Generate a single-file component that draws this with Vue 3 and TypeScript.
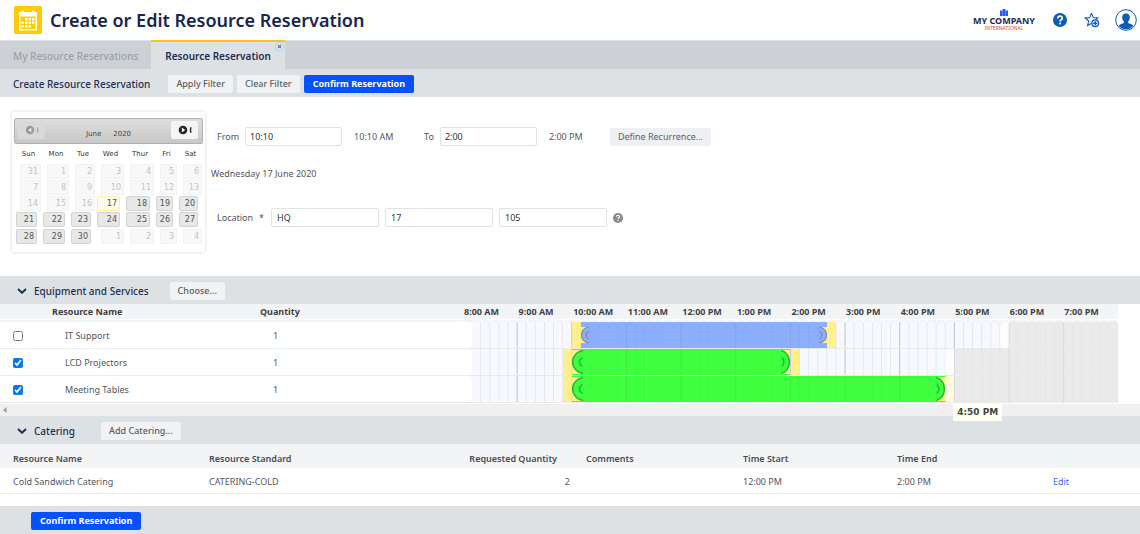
<script setup lang="ts">
import { ref } from 'vue'

interface Day { n: number; state: 'off' | 'on' | 'today' }
interface Band { kind: string; from: number; to: number }
interface Resource {
  name: string
  quantity: number
  checked: boolean
  color: string
  from: number
  to: number
  bands: Band[]
  tip?: string
}

const dayNames = ['Sun', 'Mon', 'Tue', 'Wed', 'Thur', 'Fri', 'Sat']
const numbers = [31, ...Array.from({ length: 30 }, (_, i) => i + 1), 1, 2, 3, 4]
const weeks: Day[][] = Array.from({ length: 5 }, (_, w) =>
  numbers.slice(w * 7, w * 7 + 7).map((n, d) => {
    const i = w * 7 + d
    return { n, state: i === 17 ? 'today' : i > 17 && i < 31 ? 'on' : 'off' }
  })
)

const hours = ['8:00 AM', '9:00 AM', '10:00 AM', '11:00 AM', '12:00 PM', '1:00 PM', '2:00 PM', '3:00 PM', '4:00 PM', '5:00 PM', '6:00 PM', '7:00 PM']

// Times are minutes after 8:00 AM; the scale covers twelve hours.
const resources = ref<Resource[]>([
  {
    name: 'IT Support', quantity: 1, checked: false, color: 'blue', from: 130, to: 400,
    bands: [
      { kind: 'buffer', from: 120, to: 130 },
      { kind: 'buffer', from: 400, to: 410 },
      { kind: 'after', from: 590, to: 600 },
      { kind: 'closed', from: 600, to: 720 }
    ]
  },
  {
    name: 'LCD Projectors', quantity: 1, checked: true, color: 'green', from: 120, to: 360,
    bands: [
      { kind: 'buffer', from: 110, to: 120 },
      { kind: 'buffer', from: 360, to: 370 },
      { kind: 'after', from: 530, to: 540 },
      { kind: 'closed', from: 540, to: 720 }
    ]
  },
  {
    name: 'Meeting Tables', quantity: 1, checked: true, color: 'green', from: 120, to: 530,
    bands: [
      { kind: 'buffer', from: 110, to: 120 },
      { kind: 'buffer', from: 530, to: 540 },
      { kind: 'after', from: 530, to: 540 },
      { kind: 'closed', from: 540, to: 720 }
    ],
    tip: '4:50 PM'
  }
])

const span = (from: number, to: number) => ({ left: `${from / 7.2}%`, width: `${(to - from) / 7.2}%` })

const start = ref('10:10')
const end = ref('2:00')
const building = ref('HQ')
const floor = ref('17')
const room = ref('105')
</script>

<template>
  <div class="page">
    <header class="top">
      <svg class="app-icon" viewBox="0 0 28 28" aria-hidden="true">
        <rect width="28" height="28" rx="2" fill="#fc0" />
        <path fill="#fff" d="M5 6h2.500V4.500h2.500V6h8V4.500h2.500V6H23v18.500H5z" />
        <path fill="#fc0" d="M6.500 10.500h15V23h-15z" />
        <path fill="#fff" d="M11 12h2.400v2.400H11zM14.500 12h2.400v2.400h-2.400zM18 12h2.400v2.400H18zM7.500 15.500h2.400v2.400H7.500zM11 15.500h2.400v2.400H11zM14.500 15.500h2.400v2.400h-2.400zM18 15.500h2.400v2.400H18zM7.500 19h2.400v2.400H7.500zM11 19h2.400v2.400H11zM14.500 19h2.400v2.400h-2.400z" />
      </svg>
      <h1>Create or Edit Resource Reservation</h1>
      <div class="brand">
        <svg viewBox="0 0 8 7" aria-hidden="true"><path fill="#1f5fff" d="M0 1.500h2.200V7H0zM2.500 0h3v7h-3zM5.800 1.500H8V7H5.800z" /></svg>
        <strong>MY COMPANY</strong>
        <span>INTERNATIONAL</span>
      </div>
      <button class="icon" aria-label="Help">
        <svg width="14" height="14" viewBox="0 0 14 14"><circle cx="7" cy="7" r="7" fill="#0a5cb8" /><path d="M4.800 5.400c0-3 4.600-2.900 4.500-.2 0 1.600-2.200 1.500-2.200 3.200" fill="none" stroke="#fff" stroke-width="1.600" /><circle cx="7.100" cy="10.500" r="1" fill="#fff" /></svg>
      </button>
      <button class="icon" aria-label="Add favourite">
        <svg width="16" height="16" viewBox="0 0 16 16"><path d="M7.500 1.300 9.300 5.600l4.500.4-3.400 3M5.700 5.600 1.200 6l3.500 3-1.100 4.600 3.900-2.400M7.500 1.300 5.700 5.600" fill="none" stroke="#0a5cb8" stroke-width="1.100" /><circle cx="11.200" cy="11.200" r="3.300" fill="#fff" stroke="#0a5cb8" stroke-width="1.300" /><path d="M11.200 9.200v4M9.200 11.200h4" stroke="#0a5cb8" stroke-width="1.400" /></svg>
      </button>
      <button class="icon" aria-label="Account">
        <svg width="22" height="22" viewBox="0 0 22 22"><circle cx="11" cy="11" r="10.300" fill="#fff" stroke="#0a5cb8" stroke-width="1" /><path fill="#0a5cb8" d="M11 4.500c2.700 0 4 1.700 3.800 4.300-.1 1.700-.8 3-1.700 3.700v1.600c1.600.8 4 1 5.200 2.600A9.500 9.500 0 0 1 11 20.300a9.500 9.500 0 0 1-7.300-3.600c1.200-1.600 3.600-1.800 5.200-2.600v-1.600c-.9-.7-1.600-2-1.700-3.700C7 6.200 8.300 4.500 11 4.500z" /></svg>
      </button>
    </header>

    <nav class="tabs">
      <a href="#" class="tab">My Resource Reservations</a>
      <a href="#" class="tab active">Resource Reservation</a>
      <button class="close" aria-label="Close tab">
        <svg width="9" height="9" viewBox="0 0 9 9"><circle cx="4.500" cy="4.500" r="4" fill="#e6edf6" stroke="#a9c4e4" stroke-width=".8" /><path d="M3 3l3 3M6 3 3 6" stroke="#4779b5" stroke-width="1.200" /></svg>
      </button>
    </nav>

    <div class="bar">
      <h2 class="bar-title">Create Resource Reservation</h2>
      <button class="btn">Apply Filter</button>
      <button class="btn">Clear Filter</button>
      <button class="btn primary">Confirm Reservation</button>
    </div>

    <main class="form">
      <section class="calendar">
        <div class="month">
          <button class="step dim" aria-label="Previous month">
            <svg width="14" height="10" viewBox="0 0 14 10"><circle cx="5" cy="5" r="4.200" fill="#999" /><path fill="#eee" d="M6.300 2.800v4.400L3.200 5z" /><path d="M13 2.500q-1.200 2.500 0 5" fill="none" stroke="#999" /></svg>
          </button>
          <span class="month-name">June</span><span>2020</span>
          <button class="step next" aria-label="Next month">
            <svg width="14" height="10" viewBox="0 0 14 10"><circle cx="5" cy="5" r="4.300" fill="#222" /><path fill="#fff" d="M3.900 2.600v4.800L7.200 5z" /><path d="M13 2.300q-1.200 2.700 0 5.400" fill="none" stroke="#222" stroke-width="1.400" /></svg>
          </button>
        </div>
        <table class="days">
          <colgroup><col v-for="d in dayNames" :key="d" :class="d.toLowerCase()" /></colgroup>
          <thead><tr><th v-for="d in dayNames" :key="d">{{ d }}</th></tr></thead>
          <tbody>
            <tr v-for="(week, w) in weeks" :key="w">
              <td v-for="(day, d) in week" :key="d">
                <button class="day" :class="day.state" :disabled="day.state === 'off'">{{ day.n }}</button>
              </td>
            </tr>
          </tbody>
        </table>
      </section>

      <section class="fields">
        <div class="line">
          <label for="from">From</label>
          <input id="from" v-model="start" class="time" />
          <span class="echo">10:10 AM</span>
          <label for="to">To</label>
          <input id="to" v-model="end" class="time" />
          <span class="echo last">2:00 PM</span>
          <button class="btn gray">Define Recurrence...</button>
        </div>
        <p class="date">Wednesday 17 June 2020</p>
        <div class="line location">
          <label for="building" class="wide"><span>Location</span><span>*</span></label>
          <input id="building" v-model="building" class="place" />
          <input v-model="floor" class="place" aria-label="Floor" />
          <input v-model="room" class="place" aria-label="Room" />
          <svg width="10" height="10" viewBox="0 0 14 14" aria-hidden="true"><circle cx="7" cy="7" r="7" fill="#858a90" /><path d="M4.800 5.400c0-3 4.600-2.900 4.500-.2 0 1.600-2.200 1.500-2.200 3.200" fill="none" stroke="#fff" stroke-width="1.600" /><circle cx="7.100" cy="10.500" r="1" fill="#fff" /></svg>
        </div>
      </section>
    </main>

    <div class="bar section">
      <svg width="10" height="6" viewBox="0 0 10 6" aria-hidden="true"><path d="M1 1l4 3.800L9 1" fill="none" stroke="#1b2f57" stroke-width="1.900" /></svg>
      <h2>Equipment and Services</h2>
      <button class="btn">Choose...</button>
    </div>

    <table class="equipment">
      <colgroup>
        <col class="c-check" /><col class="c-name" /><col class="c-qty" />
        <col v-for="h in hours" :key="h" /><col class="c-end" />
      </colgroup>
      <thead>
        <tr>
          <th></th><th>Resource Name</th><th>Quantity</th>
          <th v-for="h in hours" :key="h">{{ h }}</th>
          <th class="blank"></th>
        </tr>
        <tr class="ruler" aria-hidden="true"><td></td><td></td><td></td><td v-for="h in hours" :key="h" class="ticks"></td><td class="blank"></td></tr>
      </thead>
      <tbody>
        <tr v-for="r in resources" :key="r.name">
          <td class="check"><input v-model="r.checked" type="checkbox" :aria-label="r.name" /></td>
          <td class="name">{{ r.name }}</td>
          <td class="qty">{{ r.quantity }}</td>
          <td :colspan="12" class="cell">
            <div class="track">
              <div class="grid"></div>
              <div class="band before" :style="span(0, 10)"></div>
              <div v-for="(b, i) in r.bands" :key="i" class="band" :class="b.kind" :style="span(b.from, b.to)"></div>
              <div class="booking" :class="r.color" :style="span(r.from, r.to)">
                <svg class="handle" viewBox="0 0 13 26" preserveAspectRatio="none" aria-hidden="true">
                  <template v-if="r.color === 'green'">
                    <path fill="#fff08c" d="M0 1h11v24H0z" /><path class="fill" stroke="#26b63a" stroke-width="1.500" d="M13 1.500C-3.500 2-3.500 24 13 24.500" /><path class="fill" d="M11 1h2v24h-2z" />
                    <path fill="none" stroke="#26b63a" stroke-width="1.500" d="M10.500 8.500Q4 13 10.500 17.500" />
                  </template>
                  <template v-else>
                    <path fill="#fff08c" d="M0 5h8v16H0z" /><path class="fill" stroke="#8088b0" stroke-width="1.200" d="M8 5C-2 6-2 20 8 21" />
                    <path fill="none" stroke="#8088b0" stroke-width="1.200" d="M7.500 9Q2.500 13 7.500 17" />
                  </template>
                </svg>
                <svg class="handle end" viewBox="0 0 13 26" preserveAspectRatio="none" aria-hidden="true">
                  <template v-if="r.color === 'green'">
                    <path fill="#fff08c" d="M5 1h8v24H5z" /><path class="fill" stroke="#26b63a" stroke-width="1.500" d="M4.500 1.500C15 4 15 22 4.500 24.500" />
                    <path fill="none" stroke="#26b63a" stroke-width="1.500" d="M5 8.500Q9 13 5 17.500" />
                  </template>
                  <template v-else>
                    <path fill="#fff08c" d="M5 5h8v16H5z" /><path class="fill" stroke="#8088b0" stroke-width="1.200" d="M5 5C15 6 15 20 5 21" />
                    <path fill="none" stroke="#8088b0" stroke-width="1.200" d="M5.500 9Q10.500 13 5.500 17" />
                  </template>
                </svg>
              </div>
              <div class="grid faint"></div>
              <div v-if="r.tip" class="tip" :style="{ left: `${(r.to + 10) / 7.2}%` }">{{ r.tip }}</div>
            </div>
          </td>
          <td class="blank"></td>
        </tr>
      </tbody>
    </table>
    <div class="scroll"><svg width="4" height="6" viewBox="0 0 4 6" aria-hidden="true"><path d="M3.500 0v6L0 3z" fill="#999" /></svg></div>

    <div class="bar section food">
      <svg width="10" height="6" viewBox="0 0 10 6" aria-hidden="true"><path d="M1 1l4 3.800L9 1" fill="none" stroke="#1b2f57" stroke-width="1.900" /></svg>
      <h2>Catering</h2>
      <button class="btn">Add Catering...</button>
    </div>

    <table class="catering">
      <colgroup><col class="k1" /><col class="k2" /><col class="k3" /><col class="k4" /><col class="k5" /><col class="k6" /><col /></colgroup>
      <thead>
        <tr><th>Resource Name</th><th>Resource Standard</th><th class="num">Requested Quantity</th><th>Comments</th><th>Time Start</th><th>Time End</th><th></th></tr>
      </thead>
      <tbody>
        <tr><td>Cold Sandwich Catering</td><td>CATERING-COLD</td><td class="num">2</td><td></td><td>12:00 PM</td><td>2:00 PM</td><td><a href="#">Edit</a></td></tr>
      </tbody>
    </table>

    <footer class="bar foot"><button class="btn primary">Confirm Reservation</button></footer>
  </div>
</template>

<style>
body { background: #fff; }
</style>

<style scoped>
.page { font: 9px/12px "Noto Sans", "Open Sans", sans-serif; color: #54565c; }
button, input { font: inherit; color: inherit; box-sizing: border-box; margin: 0; }
button { border: 0; padding: 0; cursor: pointer; background: none; white-space: nowrap; }
h1, h2, p { margin: 0; }
svg { display: block; flex: none; }

.top { display: flex; align-items: center; height: 40px; padding: 0 3px 0 14px; border-bottom: 1px solid #dfe2e4; }
.app-icon { width: 28px; height: 28px; }
h1 { flex: 1; margin-left: 8px; font-size: 18px; line-height: 24px; font-weight: 600; color: #16264c; }
.brand { display: flex; flex-direction: column; align-items: center; margin-right: 18px; }
.brand svg { width: 8px; height: 7px; }
.brand strong { font-size: 9px; line-height: 10px; font-weight: 700; color: #1c2c55; }
.brand span { font-size: 5px; line-height: 5px; color: #e0483a; }
.icon + .icon { margin-left: 17px; }
.icon:last-child { margin-left: 15px; }

.tabs { display: flex; height: 28px; background: #cdd1d5; }
.tab { display: flex; align-items: center; padding: 2px 13px 0; font-size: 10px; font-weight: 500; color: #9ca1a6; text-decoration: none; }
.tab.active { margin-top: -1px; padding: 1px 14px 0; background: #dde1e4; border-top: 2px solid #f5c518; font-weight: 600; color: #1c2d55; }
.close { align-self: flex-start; margin: 1px 0 0 -10px; }

.bar { display: flex; align-items: center; gap: 4px; height: 26px; padding: 2px 13px 0; background: #dde1e4; }
.bar h2 { font-size: 10px; line-height: 14px; font-weight: 500; color: #1f3058; }
.bar .bar-title { margin-right: 14px; }
.section { padding-left: 17px; }
.section svg { margin-right: 3px; }
.section .btn { margin-left: 17px; }
.food .btn { margin-left: 22px; }
.foot { margin-top: 12px; padding-left: 31px; }
.btn { height: 18px; padding: 0 8px; border-radius: 2px; background: #f1f2f4; color: #5b5d63; font-weight: 500; }
.btn.primary { padding: 0 9px; background: #0550ff; color: #fff; font-weight: 700; }
.btn.gray { background: #eff0f3; font-weight: 400; }

.form { display: flex; align-items: flex-start; gap: 6px; padding: 15px 12px 24px; }
.calendar { width: 193px; height: 140px; padding: 6px 2px 0; box-sizing: border-box; box-shadow: 0 0 3px #d5d5d5; font: 8px/10px "DejaVu Sans", sans-serif; color: #444; }
.month { display: flex; align-items: center; height: 26px; padding: 0 4px 0 3px; box-sizing: border-box; border: 1px solid #b0b0b0; border-radius: 2px; background: linear-gradient(#dedede, #c8c8c8); }
.month span { padding-top: 5px; font-size: 7px; }
.month .month-name { margin: 0 12px 0 41px; }
.step { display: flex; align-items: center; justify-content: center; width: 27px; height: 18px; border-radius: 2px; background: #f4f4f5; margin-bottom: 3px; }
.step.dim { background: #d9d9d9; }
.step.next { margin-left: auto; }
.days { width: 188px; margin-left: 1px; border-collapse: collapse; table-layout: fixed; }
.days th { height: 18px; padding: 1px 0 0; font-size: 7px; font-weight: 400; text-align: center; color: #333; }
.days td { height: 16px; padding: 0; vertical-align: middle; }
.days tr:nth-child(n + 4) td { height: 17px; }
.sun { width: 27px; } .mon { width: 28px; } .tue { width: 26px; } .wed { width: 29px; } .thur { width: 30px; } .fri { width: 23px; } .sat { width: 25px; }
.day { display: block; width: calc(100% - 6px); height: 15px; margin-left: 1px; padding: 1px 2px 0 0; border: 1px solid #d3d3d3; border-radius: 2px; background: #e8e8e8; text-align: right; font-size: 8px; line-height: 12px; color: #555; }
.day.off { margin-left: 5px; border-color: #f2f2f2; border-radius: 0; background: #f8f8f8; color: #c4c4c4; }
.day.today { border-color: #fcefa1; background: #fdfaee; }

.fields { display: flex; flex-direction: column; padding-top: 15px; }
.line { display: flex; align-items: center; gap: 6px; padding-left: 6px; }
.line input { height: 19px; padding: 0 4px; border: 1px solid #e0e2e4; border-radius: 2px; background: #fff; color: #333; }
.line .time { width: 97px; }
.line .place { width: 108px; padding: 0 5px; }
.line.location { gap: 6px; }
.echo { width: 64px; margin-left: 6px; }
.echo.last { width: 55px; }
.wide { display: flex; gap: 6px; width: 48px; }
.date { margin: 22px 0 28px; }

.equipment, .catering { width: 100%; border-collapse: collapse; table-layout: fixed; }
.c-check { width: 51px; } .c-name { width: 208px; } .c-qty { width: 204px; } .c-end { width: 22px; }
.equipment th { height: 15px; padding: 1px 0 0 1px; background: #f3f4f6; border-bottom: 1px solid #fff; text-align: left; font-weight: 700; color: #3f4146; white-space: nowrap; box-sizing: border-box; }
.equipment .ruler td { height: 3px; padding: 0; border: 0; background: #f3f4f6; }
.equipment .ruler .ticks { background: repeating-linear-gradient(90deg, #fff 0 1px, #f3f4f6 1px 9px); }
.equipment td { height: 26px; padding: 0; border-bottom: 1px solid #e9eaec; box-sizing: border-box; }
.equipment .blank, .equipment .ruler .blank { background: #fff; border: 0; }
.equipment .check { padding-top: 2px; }
.check input { display: block; width: 10px; height: 10px; margin-left: 13px; accent-color: #0b78f0; }
.equipment .name, .equipment .qty { padding: 2px 0 0 14px; }
.track { position: relative; height: 26px; background: #f8f8ff; }
.band, .booking, .grid { position: absolute; top: 0; bottom: 0; }
.before { background: #fff; border-radius: 0 5px 5px 0; }
.buffer { background: #fff08c; }
.after { background: rgba(255, 255, 255, 0.75); border-radius: 5px 0 0 5px; }
.closed { background: #eaeaea; }
.blue { background: #8caeff; }
.green { background: #3dff3d; }
.blue .fill { fill: #8caeff; }
.green .fill { fill: #3dff3d; }
.handle { position: absolute; left: 0; top: 0; width: 13px; height: 100%; }
.handle.end { left: auto; right: 0; }
.grid {
  left: -1px;
  right: 0;
  clip-path: inset(0 0 0 12px);
  background:
    linear-gradient(90deg, rgba(60, 60, 70, 0.15) 1px, transparent 1px) 0 0 / calc(100% / 12) 100%,
    linear-gradient(90deg, rgba(80, 80, 230, 0.08) 1px, transparent 1px) 0 0 / calc(100% / 72) 100%;
}
.grid.faint {
  background:
    linear-gradient(90deg, rgba(60, 60, 70, 0.07) 1px, transparent 1px) 0 0 / calc(100% / 12) 100%,
    linear-gradient(90deg, rgba(60, 60, 100, 0.03) 1px, transparent 1px) 0 0 / calc(100% / 72) 100%;
}
.tip { position: absolute; top: 27px; z-index: 1; padding: 3px 4px; margin-left: -1px; background: #fffff4; font: bold 9px/12px "DejaVu Sans", sans-serif; color: #444; white-space: nowrap; }
.scroll { display: flex; align-items: center; height: 12px; margin-top: 1px; padding-left: 3px; background: #f0f0f0; }

.k1 { width: 209px; } .k2 { width: 220px; } .k3 { width: 145px; } .k4 { width: 157px; } .k5 { width: 154px; } .k6 { width: 156px; }
.catering th { height: 24px; padding: 6px 12px 0; box-sizing: border-box; background: #f3f4f6; text-align: left; font-weight: 600; color: #4a4c52; white-space: nowrap; }
.catering td { height: 25px; padding: 3px 12px 0; box-sizing: border-box; border-bottom: 1px solid #e9eaec; }
.catering th:first-child, .catering td:first-child { padding-left: 13px; }
.catering th:nth-child(2), .catering td:nth-child(2) { padding-left: 0; }
.catering th.num { padding-right: 17px; text-align: right; }
.catering td.num { padding-right: 4px; text-align: right; }
.catering a { color: #3b6cf0; text-decoration: none; }
</style>
